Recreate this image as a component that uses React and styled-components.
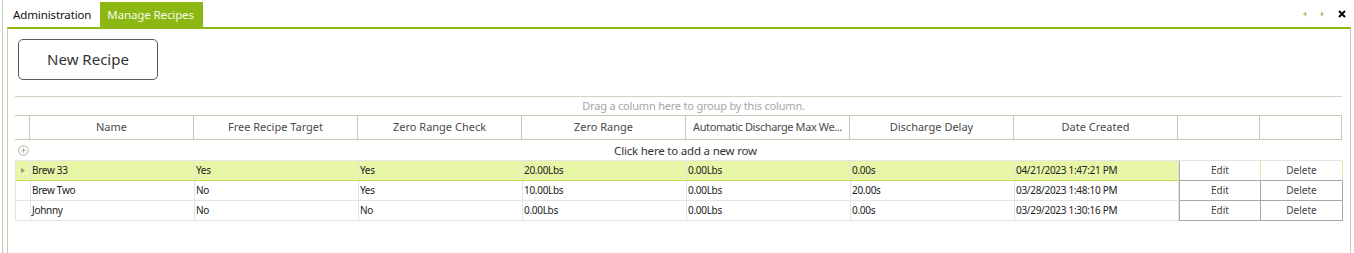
import React from "react";
import styled, { createGlobalStyle } from "styled-components";

const GlobalStyle = createGlobalStyle`
  html, body {
    margin: 0;
    padding: 0;
    background: #ffffff;
  }
  body {
    font-family: "Noto Sans", "Open Sans", sans-serif;
  }
`;

const columns = [
  "Name",
  "Free Recipe Target",
  "Zero Range Check",
  "Zero Range",
  "Automatic Discharge Max We...",
  "Discharge Delay",
  "Date Created",
  "",
  "",
];

const rows = [
  ["Brew 33", "Yes", "Yes", "20.00Lbs", "0.00Lbs", "0.00s", "04/21/2023 1:47:21 PM"],
  ["Brew Two", "No", "Yes", "10.00Lbs", "0.00Lbs", "20.00s", "03/28/2023 1:48:10 PM"],
  ["Johnny", "No", "No", "0.00Lbs", "0.00Lbs", "0.00s", "03/29/2023 1:30:16 PM"],
];

const GRID_COLS = "15px repeat(7, 164px) 82px 82px";

export default function App() {
  return (
    <>
      <GlobalStyle />
      <Page>
        <Frame>
          <TabStrip>
            <Tab>Administration</Tab>
            <Tab active>Manage Recipes</Tab>
            <TabTools>
              <Arrow viewBox="0 0 6 6">
                <path d="M5 0 L1 3 L5 6 Z" />
              </Arrow>
              <Arrow viewBox="0 0 6 6">
                <path d="M1 0 L5 3 L1 6 Z" />
              </Arrow>
              <CloseIcon viewBox="0 0 8 8">
                <path d="M1 1 L7 7 M7 1 L1 7" />
              </CloseIcon>
            </TabTools>
          </TabStrip>
          <Panel>
            <NewButton>New Recipe</NewButton>
            <Grid>
              <GroupPanel>Drag a column here to group by this column.</GroupPanel>
              <HeaderRow>
                <HeaderCell />
                {columns.map((c, i) => (
                  <HeaderCell key={i} tight={c.length > 20}>
                    {c}
                  </HeaderCell>
                ))}
              </HeaderRow>
              <NewRow>
                <AddIcon viewBox="0 0 11 11">
                  <circle cx="5.5" cy="5.5" r="4.8" />
                  <path d="M5.5 3.3 V7.7 M3.3 5.5 H7.7" />
                </AddIcon>
                <NewRowText>Click here to add a new row</NewRowText>
              </NewRow>
              {rows.map((r, i) => (
                <DataRow key={i} selected={i === 0}>
                  <Indicator>
                    {i === 0 && (
                      <RowArrow viewBox="0 0 5 7">
                        <path d="M0 0 L5 3.5 L0 7 Z" />
                      </RowArrow>
                    )}
                  </Indicator>
                  {r.map((v, j) => (
                    <DataCell key={j}>{v}</DataCell>
                  ))}
                  <ButtonCell first selected={i === 0}>
                    Edit
                  </ButtonCell>
                  <ButtonCell selected={i === 0}>Delete</ButtonCell>
                </DataRow>
              ))}
            </Grid>
          </Panel>
        </Frame>
      </Page>
    </>
  );
}

const Page = styled.div`
  height: 253px;
  padding-left: 2px;
  box-sizing: border-box;
  display: flex;
`;

const Frame = styled.div`
  flex: 1;
  border-left: 1px solid #cbcbb8;
  display: flex;
  flex-direction: column;
`;

const TabStrip = styled.div`
  height: 25px;
  margin-top: 2px;
  padding-left: 3px;
  display: flex;
  align-items: stretch;
`;

const Tab = styled.div`
  display: flex;
  align-items: center;
  padding: 0 9px 1px 7px;
  font-size: 11.5px;
  letter-spacing: -0.12px;
  color: ${(p) => (p.active ? "#f6fae6" : "#111111")};
  background: ${(p) => (p.active ? "#8db814" : "#ffffff")};
`;

const TabTools = styled.div`
  margin-left: auto;
  display: flex;
  align-items: center;
  gap: 13px;
  padding-right: 8px;
  padding-bottom: 2px;
`;

const Arrow = styled.svg`
  width: 5px;
  height: 6px;
  fill: #a9c27c;
`;

const CloseIcon = styled.svg`
  width: 8px;
  height: 8px;
  stroke: #000000;
  stroke-width: 2;
  fill: none;
`;

const Panel = styled.div`
  flex: 1;
  margin-left: 4px;
  margin-right: 3px;
  border-top: 2px solid #8db814;
  border-left: 1px solid #cbcbb8;
  border-right: 1px solid #cbcbb8;
  padding: 10px 0 0 10px;
  display: flex;
  flex-direction: column;
  align-items: flex-start;
`;

const NewButton = styled.button`
  width: 140px;
  height: 41px;
  border: 1px solid #5a5a5a;
  border-radius: 5px;
  background: #ffffff;
  font-family: "Noto Sans", "Open Sans", sans-serif;
  font-size: 15px;
  color: #333333;
  padding: 0 0 2px 0;
`;

const Grid = styled.div`
  margin-top: 16px;
  margin-left: -3px;
  width: 1327px;
  border-top: 1px solid #d3d3c4;
`;

const GroupPanel = styled.div`
  height: 18px;
  line-height: 18px;
  text-align: center;
  padding-left: 30px;
  font-size: 11px;
  letter-spacing: -0.2px;
  color: #a6a6a6;
`;

const HeaderRow = styled.div`
  display: grid;
  grid-template-columns: ${GRID_COLS};
  height: 23px;
  border-top: 1px solid #c8c8b4;
  border-bottom: 1px solid #c8c8b4;
`;

const HeaderCell = styled.div`
  border-right: 1px solid #c8c8b4;
  font-size: 11px;
  letter-spacing: ${(p) => (p.tight ? "-0.4px" : "0")};
  color: #4a4a4a;
  text-align: center;
  line-height: 22px;
  white-space: nowrap;
`;

const NewRow = styled.div`
  height: 20px;
  display: flex;
  align-items: center;
  border-bottom: 1px solid #e4e4e4;
`;

const AddIcon = styled.svg`
  width: 11px;
  height: 11px;
  margin-left: 3px;
  fill: none;
  stroke: #a8a898;
  stroke-width: 0.9;
`;

const NewRowText = styled.div`
  flex: 1;
  text-align: center;
  font-size: 11.5px;
  letter-spacing: -0.2px;
  color: #333333;
`;

const DataRow = styled.div`
  display: grid;
  grid-template-columns: ${GRID_COLS};
  height: 20px;
  background: ${(p) => (p.selected ? "#e7f6a7" : "#ffffff")};
  border-bottom: 1px solid ${(p) => (p.selected ? "#c9dc5e" : "#e4e4e4")};
  box-sizing: border-box;
  border-left: 1px solid #e4e4e4;
`;

const Indicator = styled.div`
  display: flex;
  align-items: center;
  justify-content: center;
  border-right: 1px solid #e4e4e4;
`;

const RowArrow = styled.svg`
  width: 4px;
  height: 7px;
  fill: #9a9a7a;
`;

const DataCell = styled.div`
  border-right: 1px solid #e4e4e4;
  font-size: 10px;
  letter-spacing: -0.3px;
  color: #222222;
  padding-left: 1px;
  line-height: 19px;
  white-space: nowrap;
  overflow: hidden;
`;

const ButtonCell = styled.div`
  background: #ffffff;
  margin-bottom: -1px;
  border-right: 1px solid ${(p) => (p.selected ? "#dcebb0" : "#a8a8a8")};
  border-bottom: 1px solid #a8a8a8;
  border-left: ${(p) => (p.first ? "1px solid #a8a8a8" : "none")};
  box-sizing: border-box;
  font-size: 10px;
  color: #444444;
  text-align: center;
  line-height: 19px;
`;
